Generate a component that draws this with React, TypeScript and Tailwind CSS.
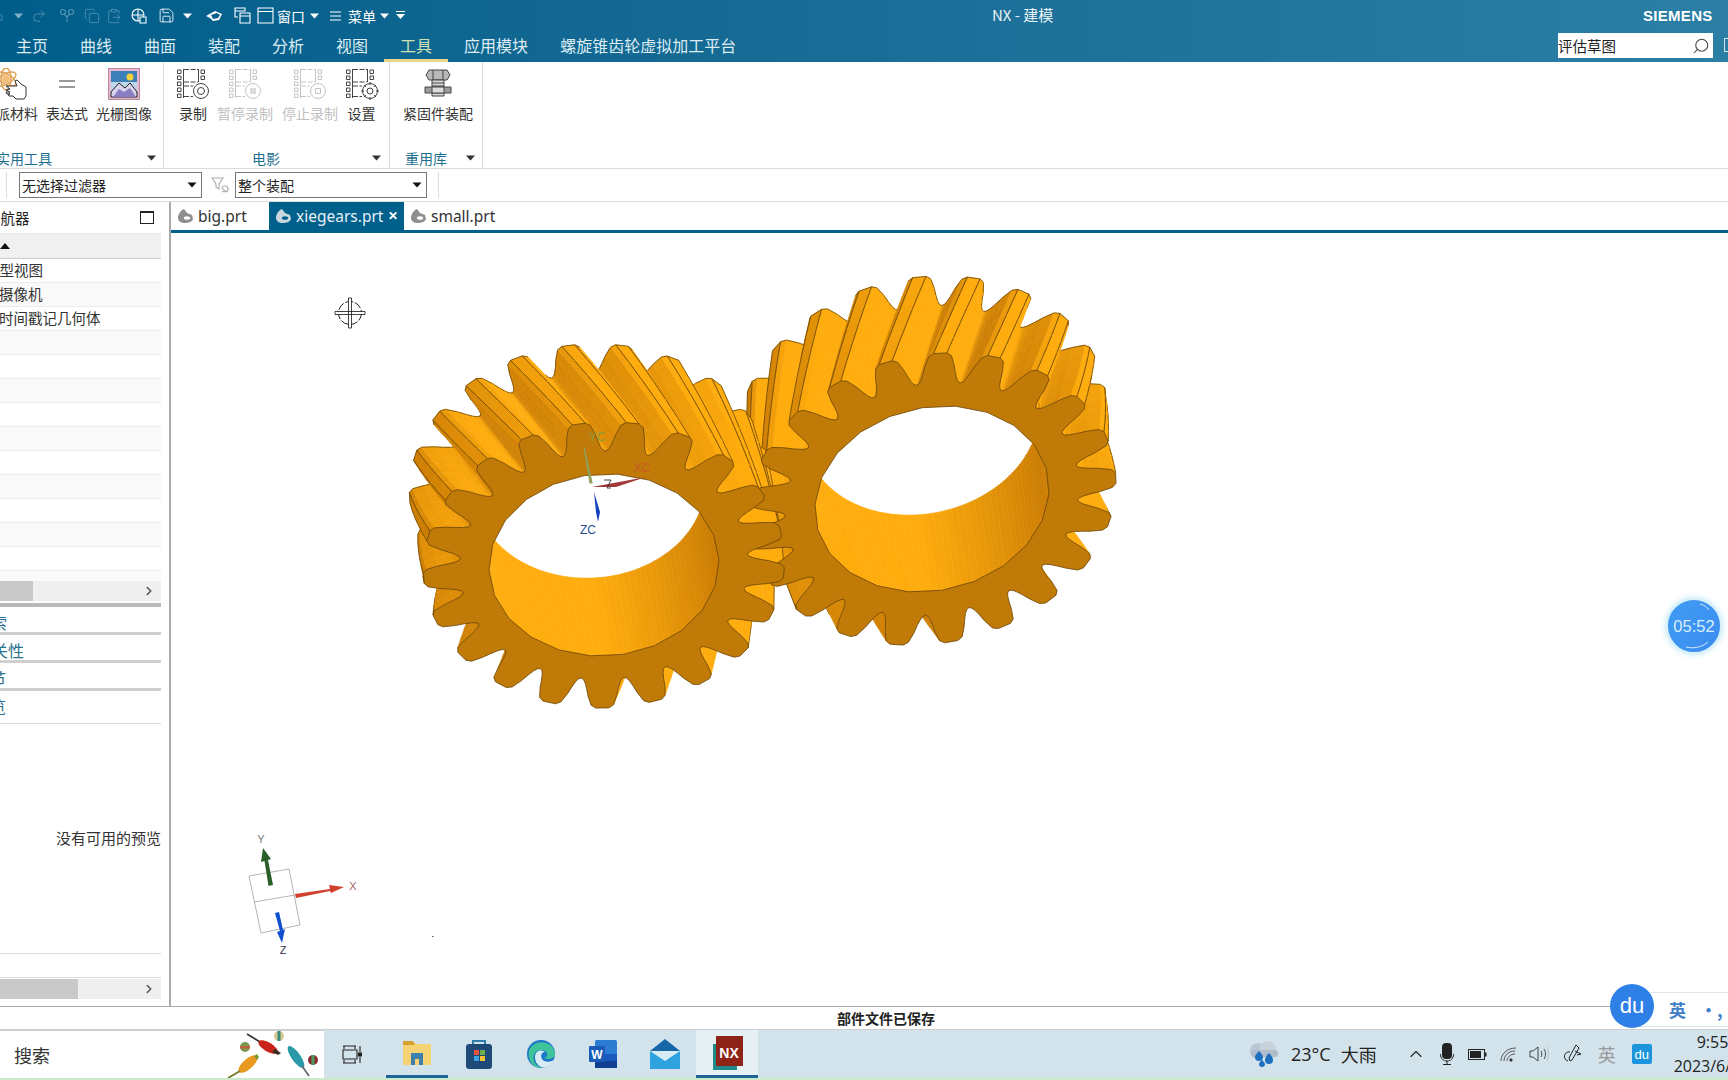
import { Undo2, Redo2, Copy, ClipboardPaste, Save, Search, ChevronRight, ChevronUp } from "lucide-react";

type Vec = [number, number];

type GearSpec = {
  teeth: number;
  phase: number;
  twist: number;
  center: Vec;
  a: Vec;
  b: Vec;
  d: Vec;
};

const LEFT_GEAR: GearSpec = { teeth: 21, phase: 0.37, twist: -0.28, center: [604, 565], a: [115, -5], b: [3, 91], d: [-14, -78] };
const RIGHT_GEAR: GearSpec = { teeth: 21, phase: 0.7, twist: 0.24, center: [932, 499], a: [117, -5], b: [-7, 93], d: [-10, -77] };

const TIP_R = 1.57;
const ROOT_R = 1.25;

// one tooth outline: [fraction of pitch, radius, sharp edge]
const TOOTH: [number, number, boolean][] = [
  [-0.5, ROOT_R, false],
  [-0.44, ROOT_R + 0.015, false],
  [-0.39, ROOT_R + 0.05, false],
  [-0.34, ROOT_R + 0.11, false],
  [-0.29, ROOT_R + 0.19, false],
  [-0.21, TIP_R - 0.03, false],
  [-0.12, TIP_R, true],
  [0.12, TIP_R, true],
  [0.21, TIP_R - 0.03, false],
  [0.29, ROOT_R + 0.19, false],
  [0.34, ROOT_R + 0.11, false],
  [0.39, ROOT_R + 0.05, false],
  [0.44, ROOT_R + 0.015, false],
];

const mix = (t: number) => {
  const k = Math.max(0, Math.min(1, t));
  const c = (x: number, y: number) => Math.round(x + (y - x) * k);
  return `rgb(${c(204, 255)},${c(126, 172)},${c(4, 14)})`;
};

function gearParts(g: GearSpec) {
  const project = (u: number, v: number, z: number): Vec => [
    g.center[0] + u * g.a[0] + v * g.b[0] + z * g.d[0],
    g.center[1] + u * g.a[1] + v * g.b[1] + z * g.d[1],
  ];
  const fmt = (p: Vec) => `${p[0].toFixed(1)} ${p[1].toFixed(1)}`;

  // view direction in the gear's own frame
  const det = g.a[0] * g.b[1] - g.b[0] * g.a[1];
  const u0 = (-g.d[0] * g.b[1] + g.b[0] * g.d[1]) / det;
  const v0 = (-g.a[0] * g.d[1] + g.d[0] * g.a[1]) / det;
  const view = [u0, v0, 1];
  const light = [0.7, -0.35, -0.6];
  const pitch = (Math.PI * 2) / g.teeth;

  const outline: { ang: number; r: number; sharp: boolean }[] = [];
  for (let i = 0; i < g.teeth; i++) {
    for (const [f, r, sharp] of TOOTH) {
      outline.push({ ang: (i + g.phase + f) * pitch, r, sharp });
    }
  }

  const at = (ang: number, r: number, z: number): [number, number, number] => [
    r * Math.cos(ang + z * g.twist),
    r * Math.sin(ang + z * g.twist),
    z,
  ];

  const quads: { depth: number; d: string; fill: string; lines: string }[] = [];
  const slices = 5;
  outline.forEach((p, i) => {
    const q = outline[(i + 1) % outline.length];
    for (let s = 0; s < slices; s++) {
      const z0 = s / slices;
      const z1 = (s + 1) / slices;
      const p0 = at(p.ang, p.r, z0);
      const p1 = at(q.ang, q.r, z0);
      const p2 = at(q.ang, q.r, z1);
      const p3 = at(p.ang, p.r, z1);
      const e = [p1[0] - p0[0], p1[1] - p0[1], 0];
      const w = [p3[0] - p0[0], p3[1] - p0[1], p3[2] - p0[2]];
      let n = [e[1] * w[2] - e[2] * w[1], e[2] * w[0] - e[0] * w[2], e[0] * w[1] - e[1] * w[0]];
      const len = Math.hypot(n[0], n[1], n[2]) || 1;
      n = n.map((x) => x / len);
      if (n[0] * view[0] + n[1] * view[1] + n[2] * view[2] >= 0) continue;
      const dot = n[0] * light[0] + n[1] * light[1] + n[2] * light[2];
      const pts = [p0, p1, p2, p3].map((t) => project(t[0], t[1], t[2]));
      let lines = "";
      if (p.sharp) lines += `M${fmt(pts[0])}L${fmt(pts[3])}`;
      if (q.sharp) lines += `M${fmt(pts[1])}L${fmt(pts[2])}`;
      if (s === slices - 1) lines += `M${fmt(pts[3])}L${fmt(pts[2])}`;
      const cx = (p0[0] + p2[0]) / 2;
      const cy = (p0[1] + p2[1]) / 2;
      quads.push({
        depth: cx * u0 + cy * v0 + (z0 + z1) / 2,
        d: `M${pts.map(fmt).join("L")}Z`,
        fill: mix((dot + 0.6) / 1.0),
        lines,
      });
    }
  });
  quads.sort((x, y) => y.depth - x.depth);

  // bore wall, no twist
  const bore: { d: string; fill: string }[] = [];
  const facets = 120;
  for (let i = 0; i < facets; i++) {
    const a0 = (i / facets) * Math.PI * 2;
    const a1 = ((i + 1) / facets) * Math.PI * 2;
    const mid = (a0 + a1) / 2;
    const n = [-Math.cos(mid), -Math.sin(mid), 0];
    if (n[0] * view[0] + n[1] * view[1] >= 0) continue;
    const dot = n[0] * light[0] + n[1] * light[1];
    const pts = [
      project(Math.cos(a0), Math.sin(a0), 0),
      project(Math.cos(a1), Math.sin(a1), 0),
      project(Math.cos(a1), Math.sin(a1), 1),
      project(Math.cos(a0), Math.sin(a0), 1),
    ];
    bore.push({ d: `M${pts.map(fmt).join("L")}Z`, fill: mix((dot + 0.6) / 0.95) });
  }

  const faceOuter = outline.map((p) => fmt(project(p.r * Math.cos(p.ang), p.r * Math.sin(p.ang), 0)));
  const rim: string[] = [];
  for (let i = 0; i < 22; i++) {
    const a = (i / 22) * Math.PI * 2;
    rim.push(fmt(project(Math.cos(a), Math.sin(a), 0)));
  }
  const face = `M${faceOuter.join("L")}ZM${rim.join("L")}Z`;
  return { quads, bore, face };
}

const leftParts = gearParts(LEFT_GEAR);
const rightParts = gearParts(RIGHT_GEAR);

const EDGE = "#6a4406";

function GearWalls({ parts }: { parts: ReturnType<typeof gearParts> }) {
  return (
    <g>
      {parts.quads.map((q, i) => (
        <g key={i}>
          <path d={q.d} fill={q.fill} stroke={q.fill} strokeWidth={0.6} />
          {q.lines && <path d={q.lines} fill="none" stroke={EDGE} strokeWidth={0.8} />}
        </g>
      ))}
      {parts.bore.map((q, i) => (
        <path key={i} d={q.d} fill={q.fill} stroke={q.fill} strokeWidth={0.6} />
      ))}
    </g>
  );
}

function Caret({ className = "", color = "#fff", size = 9 }: { className?: string; color?: string; size?: number }) {
  return (
    <svg width={size} height={6} viewBox="0 0 9 6" className={className}>
      <path d="M0 0.5h9L4.5 5.5z" fill={color} />
    </svg>
  );
}

function TitleBar() {
  const dim = "text-[#4f93b2]";
  return (
    <div className="relative flex h-[31px] items-center text-white">
      <Undo2 size={16} strokeWidth={1.4} className={`-ml-[11px] ${dim}`} />
      <Caret className="ml-[9px]" color="#7fb2ca" />
      <Redo2 size={16} strokeWidth={1.4} className={`ml-[8px] ${dim}`} />
      <svg width="17" height="17" viewBox="0 0 17 17" fill="none" stroke="#4f93b2" strokeWidth="1.2" className="ml-[12px]">
        <circle cx="4" cy="5" r="2.5" /><circle cx="12" cy="5" r="2.5" /><path d="M5 7l3 3 3-3M8 10v5" />
      </svg>
      <Copy size={16} strokeWidth={1.3} className={`ml-[8px] ${dim}`} />
      <ClipboardPaste size={16} strokeWidth={1.3} className={`ml-[6px] ${dim}`} />
      <svg width="16" height="16" viewBox="0 0 16 16" fill="none" stroke="#fff" strokeWidth="1.1" className="ml-[9px]">
        <circle cx="7" cy="7" r="6" /><path d="M1 7h12M7 1v12" /><path d="M9 9h6v6H9z" fill="#00608c" />
      </svg>
      <Save size={17} strokeWidth={1.2} className="ml-[11px]" />
      <Caret className="ml-[8px]" />
      <svg width="18" height="14" viewBox="0 0 18 14" fill="#fff" className="ml-[13px]">
        <path d="M1 7l9-5 7 3-3 6-6 1-3-3z" /><path d="M6 6l6-2 3 2-2 3-5 1z" fill="#00608c" />
      </svg>
      <svg width="17" height="17" viewBox="0 0 17 17" fill="none" stroke="#fff" strokeWidth="1.1" className="ml-[11px]">
        <path d="M1 1h10v3H1zM1 1v9h3M6 6h10v10H6zM6 9h10" />
      </svg>
      <svg width="17" height="17" viewBox="0 0 17 17" fill="none" stroke="#fff" strokeWidth="1.1" className="ml-[6px]">
        <path d="M1 1h15v15H1zM1 4.5h15" />
      </svg>
      <span className="ml-[3px] text-[14px] leading-none">窗口</span>
      <Caret className="ml-[5px]" />
      <svg width="12" height="10" viewBox="0 0 12 10" stroke="#fff" strokeWidth="1" className="ml-[11px]">
        <path d="M0 1h11M0 5h11M0 9h11" />
      </svg>
      <span className="ml-[6px] text-[14px] leading-none">菜单</span>
      <Caret className="ml-[4px]" />
      <svg width="9" height="9" viewBox="0 0 9 9" className="ml-[7px]">
        <path d="M0 0h9v1H0zM0 3h9L4.5 8z" fill="#fff" />
      </svg>
      <span className="absolute left-[992px] top-[6px] text-[15px] leading-[18px] text-[#e9f3f7]">NX - 建模</span>
      <span className="absolute left-[1643px] top-[7px] font-['Liberation_Sans',sans-serif] text-[15px] leading-[18px] font-bold tracking-[0.3px]">
        SIEMENS
      </span>
    </div>
  );
}

function TabRow() {
  const tabs = ["主页", "曲线", "曲面", "装配", "分析", "视图", "工具", "应用模块", "螺旋锥齿轮虚拟加工平台"];
  return (
    <div className="relative flex h-[31px] items-start">
      {tabs.map((t) => (
        <div
          key={t}
          className={`h-[31px] px-4 pt-[1px] text-[16px] leading-[26px] ${
            t === "工具" ? "border-b-[3px] border-[#e6d68c] text-[#cfe0b4]" : "text-[#dcecf3]"
          }`}
        >
          {t}
        </div>
      ))}
      <div className="absolute left-[1558px] top-[2px] flex h-[25px] w-[155px] items-center justify-between bg-white pr-[3px] text-[14.5px] text-[#222]">
        <span>评估草图</span>
        <Search size={18} strokeWidth={1.4} className="-scale-x-100 text-[#444]" />
      </div>
      <div className="absolute left-[1724px] top-[7px] h-[14px] w-[6px] border-y border-l border-[#cfe8f2]" />
    </div>
  );
}

function FilmIcon({ badge, dim }: { badge: "record" | "pause" | "stop" | "gear"; dim?: boolean }) {
  const c = dim ? "#c4c4c4" : "#444";
  return (
    <svg width="34" height="32" viewBox="0 0 34 32" fill="none" stroke={c} strokeWidth="1">
      <path d="M1.5 2h3.5v3.5H1.5zM1.5 8h3.5v3.5H1.5zM1.5 14h3.5v3.5H1.5zM1.5 20h3.5v3.5H1.5zM1.5 26h3.5v3.5H1.5z" />
      <path d="M25 2h3.5v3.5H25zM25 8h3.5v3.5H25z" />
      <path d="M7.5 1v29M22.5 1v13" />
      <path d="M8 1.5h14M8 14h14M8 18h9M8 28.5h9" strokeDasharray="5 1.5" />
      <circle cx="25" cy="23" r="7.5" fill="#fff" />
      {badge === "record" && <circle cx="25" cy="23" r="3.5" />}
      {badge === "pause" && <path d="M23 20v6M27 20v6M24 20v6M26 20v6" />}
      {badge === "stop" && <path d="M22.5 20.5h5v5h-5z" />}
      {badge === "gear" && (
        <>
          <circle cx="25" cy="23" r="3" />
          <path d="M25 14v3M25 29v3M16 23h3M31 23h3M19 17l2 2M29 27l2 2M31 17l-2 2M21 27l-2 2" />
        </>
      )}
    </svg>
  );
}

function RibbonItem({ label, dim, width, children }: { label: string; dim?: boolean; width: string; children: React.ReactNode }) {
  return (
    <div className={`flex flex-col items-center ${width}`}>
      <div className="flex h-8 items-center justify-center">{children}</div>
      <span className={`mt-[3px] whitespace-nowrap text-[14px] leading-5 ${dim ? "text-[#c0c0c0]" : "text-[#333]"}`}>{label}</span>
    </div>
  );
}

function GroupLabel({ label, className, caretClass }: { label: string; className: string; caretClass: string }) {
  return (
    <div className="mt-auto flex h-5 items-center">
      <span className={`text-[14px] leading-5 whitespace-nowrap text-[#1d6f8f] ${className}`}>{label}</span>
      <Caret color="#333" className={caretClass} />
    </div>
  );
}

function Ribbon() {
  return (
    <div className="flex h-[106px] overflow-hidden bg-white">
      <div className="-ml-[18px] flex w-[182px] flex-none flex-col border-r border-[#dcdcdc] pt-[6px]">
        <div className="flex gap-2">
          <RibbonItem label="指派材料" width="w-[56px]">
            <svg width="34" height="32" viewBox="0 0 34 32" fill="none">
              <ellipse cx="13" cy="11" rx="11" ry="5" transform="rotate(30 13 11)" stroke="#e0a050" strokeWidth="1.4" />
              <ellipse cx="13" cy="11" rx="11" ry="5" transform="rotate(-30 13 11)" stroke="#e0a050" strokeWidth="1.4" />
              <ellipse cx="13" cy="11" rx="5" ry="11" stroke="#e0a050" strokeWidth="1.4" />
              <circle cx="13" cy="11" r="4" fill="#f2c078" />
              <path d="M13 18h11l-2-5 2-1 4 4 5 3v9l-2 3H23l-3-3h-4l-1-2h2-3l-1-2h4l-4-2 4-1z" fill="#fff" stroke="#333" strokeWidth="1" />
            </svg>
          </RibbonItem>
          <RibbonItem label="表达式" width="w-[42px]">
            <svg width="16" height="8" viewBox="0 0 16 8" stroke="#333" strokeWidth="1.2">
              <path d="M0 1h16M0 7h16" />
            </svg>
          </RibbonItem>
          <RibbonItem label="光栅图像" width="w-[56px]">
            <svg width="32" height="32" viewBox="0 0 32 32">
              <rect x="0.5" y="0.5" width="31" height="31" fill="#e6b8cc" stroke="#b88aa6" />
              <rect x="3" y="3" width="26" height="26" fill="#3d7fb8" />
              <rect x="3" y="14" width="26" height="15" fill="#bcd6ea" />
              <circle cx="22" cy="9" r="3.5" fill="#f4d23c" />
              <path d="M3 24l8-9 6 5 5-5 7 9v5H3z" fill="#d9d4ee" stroke="#222" strokeWidth="1" />
              <path d="M5 29l6-8 5 3 6-4 6 9z" fill="#8a7fc2" />
            </svg>
          </RibbonItem>
        </div>
        <GroupLabel label="实用工具" className="ml-[14px]" caretClass="ml-[95px]" />
      </div>
      <div className="flex w-[226px] flex-none flex-col border-r border-[#dcdcdc] pt-[6px]">
        <div className="flex gap-[10.5px] pl-[15px]">
          <RibbonItem label="录制" width="w-[28px]">
            <FilmIcon badge="record" />
          </RibbonItem>
          <RibbonItem label="暂停录制" dim width="w-[55px]">
            <FilmIcon badge="pause" dim />
          </RibbonItem>
          <RibbonItem label="停止录制" dim width="w-[54px]">
            <FilmIcon badge="stop" dim />
          </RibbonItem>
          <RibbonItem label="设置" width="w-[28px]">
            <FilmIcon badge="gear" />
          </RibbonItem>
        </div>
        <GroupLabel label="电影" className="ml-[88px]" caretClass="ml-[92px]" />
      </div>
      <div className="flex w-[93px] flex-none flex-col border-r border-[#dcdcdc] pt-[6px]">
        <div className="flex pl-[13px]">
          <RibbonItem label="紧固件装配" width="w-[70px]">
            <svg width="28" height="30" viewBox="0 0 28 30" stroke="#444" strokeWidth="1">
              <path d="M5 1h18l3 5-3 5H5L2 6z" fill="#b8b8b8" />
              <path d="M9 1v10M19 1v10" />
              <path d="M8 11h12v16H8z" fill="#d8d8d8" />
              <path d="M8 14h12M8 17h12M8 20h12M8 23h12" />
              <path d="M1 18h26v6H1z" fill="#9c9c9c" />
              <path d="M8 18h12v6H8z" fill="#dcdcdc" />
            </svg>
          </RibbonItem>
        </div>
        <GroupLabel label="重用库" className="ml-[15px]" caretClass="ml-[19px]" />
      </div>
    </div>
  );
}

function Dropdown({ label, width }: { label: string; width: string }) {
  return (
    <div className={`flex h-[26px] items-center justify-between border border-[#777] bg-white pr-[4px] pl-[2px] text-[14px] text-[#222] ${width}`}>
      <span>{label}</span>
      <Caret color="#111" size={10} />
    </div>
  );
}

function FilterBar() {
  return (
    <div className="flex h-[34px] items-center border-y border-[#dcdcdc] bg-white">
      <div className="ml-[6px] h-[26px] w-px bg-[#dcdcdc]" />
      <Dropdown label="无选择过滤器" width="ml-[12px] w-[183px]" />
      <svg width="18" height="18" viewBox="0 0 18 18" fill="none" stroke="#aaa" strokeWidth="1.1" className="ml-[9px]">
        <path d="M1 2h11L8 8v5L5 11V8zM11 13a3 3 0 1 1 3 3M11 16l3-1-2-2" />
      </svg>
      <Dropdown label="整个装配" width="ml-[6px] w-[192px]" />
      <div className="ml-[11px] h-[26px] w-px bg-[#dcdcdc]" />
    </div>
  );
}

function ScrollBar({ thumb }: { thumb: string }) {
  return (
    <div className="flex h-5 items-center justify-between bg-[#efefef]">
      <div className={`h-5 bg-[#c9c9c9] ${thumb}`} />
      <ChevronRight size={14} strokeWidth={2.6} className="mr-[5px] text-[#555]" />
    </div>
  );
}

function NavPanel() {
  const rows = ["模型视图", "摄像机", "时间戳记几何体", "", "", "", "", "", "", "", "", "", ""];
  const sections = [
    { label: "搜索", cls: "-ml-[25px]" },
    { label: "相关性", cls: "-ml-[24px]" },
    { label: "细节", cls: "-ml-[26px]" },
    { label: "预览", cls: "-ml-[26px]" },
  ];
  return (
    <div className="flex w-[171px] flex-none flex-col overflow-hidden border-r-2 border-[#ababab] bg-white">
      <div className="w-[161px]">
        <div className="flex h-[31px] items-center justify-between">
          <span className="-ml-[43px] text-[14.5px] leading-5 text-[#222]">部件导航器</span>
          <div className="mr-[7px] h-[13px] w-[14px] border-[1.5px] border-t-2 border-[#222]" />
        </div>
        <div className="flex h-[26px] items-center border-y border-b-[#ccc] border-t-[#e6e6e6] bg-[#f0f0f0]">
          <svg width="10" height="6" viewBox="0 0 10 6"><path d="M0 6h10L5 0z" fill="#111" /></svg>
        </div>
        {rows.map((r, i) => (
          <div key={i} className={`h-[24px] border-b border-[#ececec] text-[14.5px] leading-[22px] whitespace-nowrap text-[#333] ${i % 2 ? "bg-[#f9f9f9]" : "bg-white"}`}>
            {r && <span className={i === 0 ? "-ml-[15px] inline-block" : "-ml-[1px] inline-block"}>{r}</span>}
          </div>
        ))}
        <div className="h-[10px] bg-[#fafafa]" />
        <ScrollBar thumb="w-[33px]" />
        <div className="mt-[2px] h-[4px] bg-[#b9b9b9]" />
        {sections.map((s, i) => (
          <div
            key={s.label}
            className={`text-[16px] whitespace-nowrap text-[#2a6f8d] ${
              i === 3 ? "h-[33px] border-b border-[#dcdcdc] leading-[30px]" : "h-[28px] border-b-[3px] border-[#cfcfcf] leading-[30px]"
            }`}
          >
            <span className={`inline-block ${s.cls}`}>{s.label}</span>
          </div>
        ))}
        <div className="flex h-[230px] items-center justify-end border-b border-[#dcdcdc] text-[15px] text-[#333]">没有可用的预览</div>
        <div className="h-[23px]" />
        <div className="border-t border-[#dcdcdc] pt-[1px]">
          <ScrollBar thumb="w-[78px]" />
        </div>
      </div>
    </div>
  );
}

function PartIcon({ light }: { light?: boolean }) {
  return (
    <svg width="17" height="16" viewBox="0 0 17 16">
      <path d="M1 10c0-4 3-8 6-9l3 4 5 2 1 4c-1 3-5 4-8 4-4 0-7-2-7-5z" fill={light ? "#c9d6de" : "#8f8f8f"} />
      <ellipse cx="10" cy="10" rx="3.2" ry="1.8" fill={light ? "#00608c" : "#fff"} />
    </svg>
  );
}

function FileTabs() {
  return (
    <div className="flex h-[31px] flex-none border-b-[3px] border-[#00608c] bg-white text-[15.5px] leading-[26px] font-['Noto_Sans',sans-serif]">
      <div className="flex w-[98px] items-center gap-1 pl-[6px] text-[#333]">
        <PartIcon />
        <span>big.prt</span>
      </div>
      <div className="flex w-[135px] items-center gap-1 bg-[#00608c] pl-[6px] text-[#e6f1f6]">
        <PartIcon light />
        <span>xiegears.prt</span>
        <span className="ml-[1px] text-[12px] font-bold text-white">✕</span>
      </div>
      <div className="flex items-center gap-1 pl-[6px] text-[#333]">
        <PartIcon />
        <span>small.prt</span>
      </div>
    </div>
  );
}

function ModelView() {
  return (
    <svg viewBox="171 233 1557 773" className="absolute inset-0 h-full w-full" style={{ fontFamily: "Liberation Sans, sans-serif" }}>
      {/* crosshair */}
      <circle cx="350" cy="313" r="11.5" fill="none" stroke="#222" strokeWidth="1" strokeDasharray="8 1.8" />
      <path d="M335 311.5h30v3h-30zM348.5 298h3v30h-3z" fill="#fff" stroke="#111" strokeWidth="0.8" />

      {/* gears */}
      <GearWalls parts={rightParts} />
      <GearWalls parts={leftParts} />
      <path d={rightParts.face} fill="#bf7a08" fillRule="evenodd" stroke={EDGE} strokeWidth="0.8" />
      <path d={leftParts.face} fill="#bf7a08" fillRule="evenodd" stroke={EDGE} strokeWidth="0.8" />

      {/* work csys on the gear */}
      <path d="M584 447l6 36 2 0z" fill="#8fa05a" stroke="#8fa05a" strokeWidth="1.2" />
      <text x="597" y="441" fontSize="12" fill="#8b9a3c" textAnchor="middle">YC</text>
      <path d="M592 487l54-10-30 10z" fill="#a33a3a" />
      <text x="642" y="472" fontSize="12" fill="#cc5a2a" textAnchor="middle">XC</text>
      <path d="M594 492l2 20 2 10 2-10z" fill="#1240c0" />
      <text x="588" y="534" fontSize="12" fill="#2a4a90" textAnchor="middle">ZC</text>
      <path d="M604 480h7l-4 8h4" fill="none" stroke="#333" strokeWidth="0.9" />

      {/* view triad */}
      <path d="M249 876l40-7 11 56-39 8zM254 902l41-7" fill="none" stroke="#b5b5b5" strokeWidth="1" />
      <path d="M268.5 886L264.5 861L261 862L263 848L271 859L268 860L273 885Z" fill="#2a5f2a" />
      <path d="M295 894L330 889L329 885L344 887L331 893L330 891L296 898Z" fill="#d0402c" />
      <path d="M275 913L280 931L277 932L282 943L285 929L283 930L279 912Z" fill="#0f4fd0" />
      <text x="261" y="843" fontSize="11" fill="#777" textAnchor="middle">Y</text>
      <text x="353" y="890" fontSize="11" fill="#a66" textAnchor="middle">X</text>
      <text x="283" y="954" fontSize="11" fill="#335" textAnchor="middle">Z</text>
      <rect x="432" y="936" width="1.5" height="1" fill="#555" />
    </svg>
  );
}

function Timer() {
  return (
    <div className="absolute top-[364px] right-[5px] flex h-[58px] w-[58px] items-center justify-center rounded-full border-[3px] border-[#d8f1fb] bg-gradient-to-br from-[#3f9cf3] to-[#3d8cf0] text-[16.5px] text-[#d8effa] shadow-[0_0_6px_#cfeefa] font-['Liberation_Sans',sans-serif]">
      05:52
      <svg width="52" height="52" viewBox="0 0 52 52" fill="none" stroke="#cfe8fb" strokeWidth="1" className="absolute inset-0">
        <path d="M32 4c4 1 7 3 9 6M18 47c8 2 16 0 22-5" />
      </svg>
    </div>
  );
}

function Doodle() {
  return (
    <svg width="100" height="48" viewBox="0 0 100 48" className="flex-none">
      <path d="M23 4L36 12" stroke="#333" strokeWidth="1.6" />
      <ellipse cx="44" cy="17" rx="11" ry="4.5" transform="rotate(30 44 17)" fill="#c8241c" />
      <path d="M51 19l6 4-3 2-6-3z" fill="#3a3028" />
      <circle cx="55" cy="6" r="5" fill="#d8c890" />
      <path d="M53.5 1h3v10h-3z" fill="#3a8a80" />
      <circle cx="21" cy="17" r="5" fill="#7a9a50" />
      <path d="M16 16h10v2.5H16z" fill="#c06040" />
      <ellipse cx="24" cy="34" rx="12" ry="5" transform="rotate(-42 24 34)" fill="#e89a20" />
      <path d="M30 26l3-2 2 3-2 3z" fill="#7a9a30" />
      <path d="M16 41L4 48" stroke="#7a7a30" strokeWidth="2" />
      <ellipse cx="72" cy="27" rx="13" ry="4.5" transform="rotate(55 72 27)" fill="#2a9aa8" />
      <path d="M78 36l7 10" stroke="#667" strokeWidth="1.8" />
      <circle cx="89" cy="30" r="5" fill="#8a2c2c" />
      <path d="M87.5 25h3v10h-3z" fill="#4a9a60" />
    </svg>
  );
}

function Taskbar() {
  const pins: { key: string; active?: boolean; open?: boolean; icon: React.ReactNode }[] = [
    {
      key: "explorer",
      open: true,
      icon: (
        <svg width="30" height="26" viewBox="0 0 30 26">
          <path d="M1 1h10l3 3h15v21H1z" fill="#f5d274" />
          <path d="M1 1h10l2 4H1z" fill="#d8a030" />
          <path d="M9 25V13h12v12h-4v-6h-4v6z" fill="#3f7fae" />
        </svg>
      ),
    },
    {
      key: "store",
      icon: (
        <svg width="28" height="30" viewBox="0 0 28 30">
          <path d="M8 6V2h12v4" fill="none" stroke="#2f7ea8" strokeWidth="2" />
          <rect x="1" y="5" width="26" height="25" rx="3" fill="#1f4a78" />
          <rect x="9" y="11" width="5" height="5" fill="#e8563a" />
          <rect x="15" y="11" width="5" height="5" fill="#6ab04a" />
          <rect x="9" y="17" width="5" height="5" fill="#3aa0e0" />
          <rect x="15" y="17" width="5" height="5" fill="#f0c030" />
        </svg>
      ),
    },
    {
      key: "edge",
      icon: (
        <svg width="30" height="30" viewBox="0 0 30 30">
          <circle cx="15" cy="15" r="14" fill="#1b78c8" />
          <path d="M3 12C6 1 26 -1 29 14c1 6-8 7-11 5 5-1 4-7-1-8-7-1-11 5-9 11 1 3 4 6 8 7C8 30 1 21 3 12z" fill="#3fc39a" />
          <path d="M9 18c0-6 6-8 10-5-3 0-5 3-3 7 2 3 7 4 12 1-3 6-9 9-13 7-4-2-6-6-6-10z" fill="#d8ecf4" />
        </svg>
      ),
    },
    {
      key: "word",
      icon: (
        <svg width="30" height="30" viewBox="0 0 30 30">
          <rect x="7" y="1" width="22" height="28" rx="1.5" fill="#2b7cd3" />
          <rect x="7" y="15" width="22" height="7" fill="#185abd" />
          <rect x="7" y="22" width="22" height="7" fill="#103f91" />
          <rect x="1" y="7" width="16" height="16" rx="1" fill="#1a5cb8" />
          <text x="9" y="19.5" fontSize="12" fontWeight="700" fill="#fff" textAnchor="middle" fontFamily="Liberation Sans">W</text>
        </svg>
      ),
    },
    {
      key: "mail",
      icon: (
        <svg width="30" height="30" viewBox="0 0 30 30">
          <path d="M15 0l15 12H0z" fill="#1667a8" />
          <path d="M0 12h30v18H0z" fill="#2ea3e0" />
          <path d="M0 12l15 10 15-10z" fill="#d8ecf6" />
        </svg>
      ),
    },
    {
      key: "nx",
      active: true,
      open: true,
      icon: (
        <svg width="32" height="34" viewBox="0 0 32 34">
          <rect x="2" y="8" width="24" height="26" fill="#1f8a8a" />
          <rect x="5" y="0" width="27" height="30" fill="#8e2318" />
          <text x="18" y="22" fontSize="14" fontWeight="700" fill="#fff" textAnchor="middle" fontFamily="Liberation Sans">NX</text>
        </svg>
      ),
    },
  ];
  return (
    <div className="flex h-[50px] flex-none border-b-2 border-[#cbeacb] bg-[#d3e3ec]">
      <div className="flex w-[324px] flex-none items-end justify-between border-t border-[#cfcfcf] bg-white">
        <span className="mb-[11px] ml-[14px] text-[18px] leading-6 text-[#333]">搜索</span>
        <Doodle />
      </div>
      <div className="flex w-14 flex-none items-center justify-center">
        <svg width="20" height="19" viewBox="0 0 20 19" fill="none" stroke="#222" strokeWidth="1.1">
          <path d="M1 1h13M1 18h13M2 1v3M13 1v3M2 15v3M13 15v3M1 5h14v9H1z" />
          <path d="M18 1v6M18 12v6" />
          <rect x="16.5" y="8" width="3" height="3" fill="#222" />
        </svg>
      </div>
      <div className="ml-[6px] flex flex-none">
        {pins.map((p) => (
          <div
            key={p.key}
            className={`flex h-[48px] w-[62px] items-center justify-center ${p.active ? "bg-[#e6eff4]" : ""} ${
              p.open ? "border-b-[3px] border-[#1c6596]" : ""
            }`}
          >
            {p.icon}
          </div>
        ))}
      </div>
      <div className="ml-[490px] flex flex-none items-center text-[#222]">
        <svg width="32" height="28" viewBox="0 0 32 28">
          <circle cx="10" cy="11" r="8" fill="#b9c6d4" />
          <circle cx="20" cy="9" r="8" fill="#c8d2dc" />
          <rect x="3" y="10" width="27" height="7" rx="3.5" fill="#aebccb" />
          <path d="M11 11c3 3 4 5 4 6a4 4 0 0 1-8 0c0-1 1-3 4-6zM21 13c3 3 4 5 4 7a4 4 0 0 1-8 0c0-2 1-4 4-7zM14 20c2 2 3 3 3 4a3 3 0 0 1-6 0c0-1 1-2 3-4z" fill="#1f6fc0" />
        </svg>
        <span className="ml-[11px] text-[18px] font-['Open_Sans',sans-serif]">23°C</span>
        <span className="ml-[10px] text-[18px]">大雨</span>
        <ChevronUp size={20} strokeWidth={1.3} className="ml-[29px]" />
        <svg width="14" height="22" viewBox="0 0 14 22" className="ml-[14px]">
          <rect x="2" y="0" width="10" height="16" rx="4" fill="#222" />
          <path d="M0.5 11c0 5 3 7 6.5 7s6.5-2 6.5-7M7 18v3M3 21.5h8" fill="none" stroke="#222" strokeWidth="1" />
        </svg>
        <svg width="19" height="11" viewBox="0 0 19 11" className="ml-[14px]">
          <rect x="0.5" y="0.5" width="16" height="10" fill="none" stroke="#222" />
          <rect x="2" y="2" width="11" height="7" fill="#222" />
          <rect x="17" y="3.5" width="1.5" height="4" fill="#222" />
        </svg>
        <svg width="18" height="15" viewBox="0 0 18 15" fill="none" stroke="#444" strokeWidth="0.9" className="ml-[13px]">
          <path d="M1 14C1 7 7 1 16 1M4 14c0-5 4-10 11-10M7 14c0-3 3-7 8-7" />
          <circle cx="11" cy="13" r="1.2" fill="#111" />
        </svg>
        <svg width="20" height="16" viewBox="0 0 20 16" fill="none" stroke="#333" strokeWidth="0.9" className="ml-[11px]">
          <path d="M1 5h3l5-4v14l-5-4H1z" />
          <path d="M12 5c1 2 1 4 0 6M15 3c2 3 2 7 0 10" />
          <path d="M18 1c2 4 2 10 0 14" stroke="#bbb" />
        </svg>
        <svg width="20" height="20" viewBox="0 0 20 20" fill="none" stroke="#222" strokeWidth="1" className="ml-[14px]">
          <path d="M13 1l3 3-7 12-2 1-1-3z" />
          <path d="M12 7l6 3-4 1M7 8a4 4 0 1 0-2 9" />
        </svg>
        <span className="ml-[15px] text-[18px] leading-none text-[#999]">英</span>
        <div className="ml-[16px] flex h-[20px] w-[20px] items-center justify-center rounded-[2px] bg-[#1c95dc] text-[13px] leading-none font-medium text-white font-['Liberation_Sans',sans-serif]">
          du
        </div>
        <div className="ml-[22px] flex w-[76px] flex-none flex-col items-start overflow-hidden font-['Open_Sans',sans-serif] text-[16px] leading-[24px] whitespace-nowrap text-[#222]">
          <span className="ml-[23px]">9:55</span>
          <span>2023/6/12</span>
        </div>
      </div>
    </div>
  );
}

export default function App() {
  return (
    <div className="relative flex h-[1080px] w-[1728px] flex-col overflow-hidden bg-white font-['Noto_Sans_CJK_SC','Noto_Sans',sans-serif]">
      <div className="flex-none bg-gradient-to-r from-[#005d8a] to-[#2b7ea4]">
        <TitleBar />
        <TabRow />
      </div>
      <Ribbon />
      <FilterBar />
      <div className="flex h-[804px] flex-none">
        <NavPanel />
        <div className="flex min-w-0 flex-1 flex-col">
          <FileTabs />
          <div className="relative flex-1 bg-white">
            <ModelView />
            <Timer />
          </div>
        </div>
      </div>
      <div className="h-[24px] flex-none border-y border-t-[#a8a8a8] border-b-[#cfcfcf] bg-white pl-[44px] text-center text-[14px] leading-[22px] font-bold text-[#222]">
        部件文件已保存
      </div>
      <Taskbar />
      {/* baidu IME bar, floats over the status line */}
      <div className="absolute top-[992px] right-0 flex h-[35px] w-[96px] items-center border border-r-0 border-[#dce6ee] bg-white pl-[36px]">
        <span className="text-[17px] font-bold text-[#3f7fc8]">英</span>
        <span className="ml-[14px] text-[17px] font-bold text-[#3f7fc8]">•,</span>
      </div>
      <div className="absolute top-[984px] left-[1610px] flex h-[44px] w-[44px] items-center justify-center rounded-full bg-[#2f80e6] text-[22px] leading-none font-medium text-white font-['Liberation_Sans',sans-serif]">
        du
      </div>
    </div>
  );
}
